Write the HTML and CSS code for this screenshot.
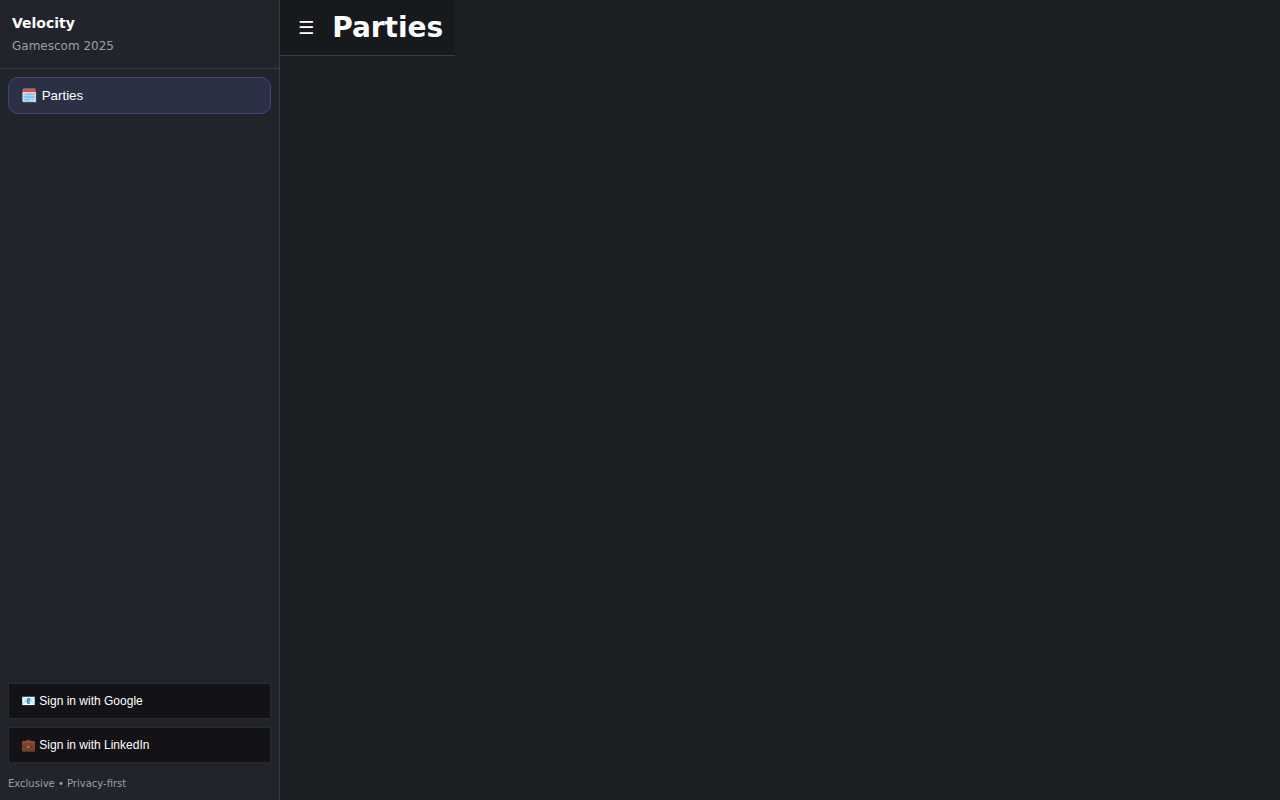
FILE: index.html
```html
<!DOCTYPE html>
<html lang="en">
<head>
<meta charset="utf-8">
<title>Velocity</title>
<link rel="stylesheet" href="styles.css">
</head>
<body>
<div class="app">
  <aside class="sidebar">
    <div class="brand">
      <div class="brand-name">Velocity</div>
      <div class="brand-sub">Gamescom 2025</div>
    </div>
    <nav class="nav">
      <button class="nav-item" type="button">🗓️ Parties</button>
    </nav>
    <div class="account">
      <button class="sign-in" type="button">📧 Sign in with Google</button>
      <button class="sign-in" type="button">💼 Sign in with LinkedIn</button>
      <div class="note">Exclusive • Privacy-first</div>
    </div>
  </aside>
  <main class="main">
    <header class="topbar">
      <button class="menu" type="button" aria-label="Menu">☰</button>
      <h1 class="title">Parties</h1>
    </header>
  </main>
</div>
</body>
</html>
```

FILE: styles.css
```css
* { box-sizing: border-box; }
body {
  margin: 0;
  background: #1b1e22;
  color: #fff;
  font-family: "DejaVu Sans", sans-serif;
  font-size: 14px;
}
.app { display: flex; min-height: 100vh; }
.sidebar {
  display: flex;
  flex-direction: column;
  width: 280px;
  background: #21242b;
  border-right: 1px solid #383a40;
}
.brand {
  display: flex;
  flex-direction: column;
  gap: 6px;
  padding: 14px 12px;
  border-bottom: 1px solid #383a40;
}
.brand-name { font-size: 14px; line-height: 18px; font-weight: 700; }
.brand-sub { font-size: 12px; line-height: 16px; color: #9aa0a6; }
.nav { flex: 1; padding: 8px; }
.nav-item {
  display: block;
  width: 100%;
  padding: 10px 12px;
  border: 1px solid #3f4684;
  border-radius: 10px;
  background: #2b3045;
  color: #fff;
  font-family: "Liberation Sans", sans-serif;
  text-align: left;
}
.account {
  display: flex;
  flex-direction: column;
  gap: 8px;
  padding: 8px;
}
.sign-in {
  padding: 10px 12px;
  border: 1px solid #2a2b30;
  background: #131217;
  color: #fff;
  font-family: "Liberation Sans", sans-serif;
  font-size: 12px;
  line-height: 14px;
  min-height: 36px;
  text-align: left;
}
.note { padding: 7px 0 2px; font-size: 10px; line-height: 12px; color: #9aa0a6; }
.main { flex: 1; }
.topbar {
  display: flex;
  align-items: center;
  gap: 12px;
  width: fit-content;
  padding: 10px 12px;
  background: #171a1d;
  border-bottom: 1px solid #383a40;
}
.menu {
  padding: 6px;
  border: 0;
  background: none;
  color: #fff;
  font-family: "DejaVu Sans", sans-serif;
  font-size: 18px;
  line-height: 20px;
}
.title { margin: 0; font-size: 28px; line-height: 35px; }
```
